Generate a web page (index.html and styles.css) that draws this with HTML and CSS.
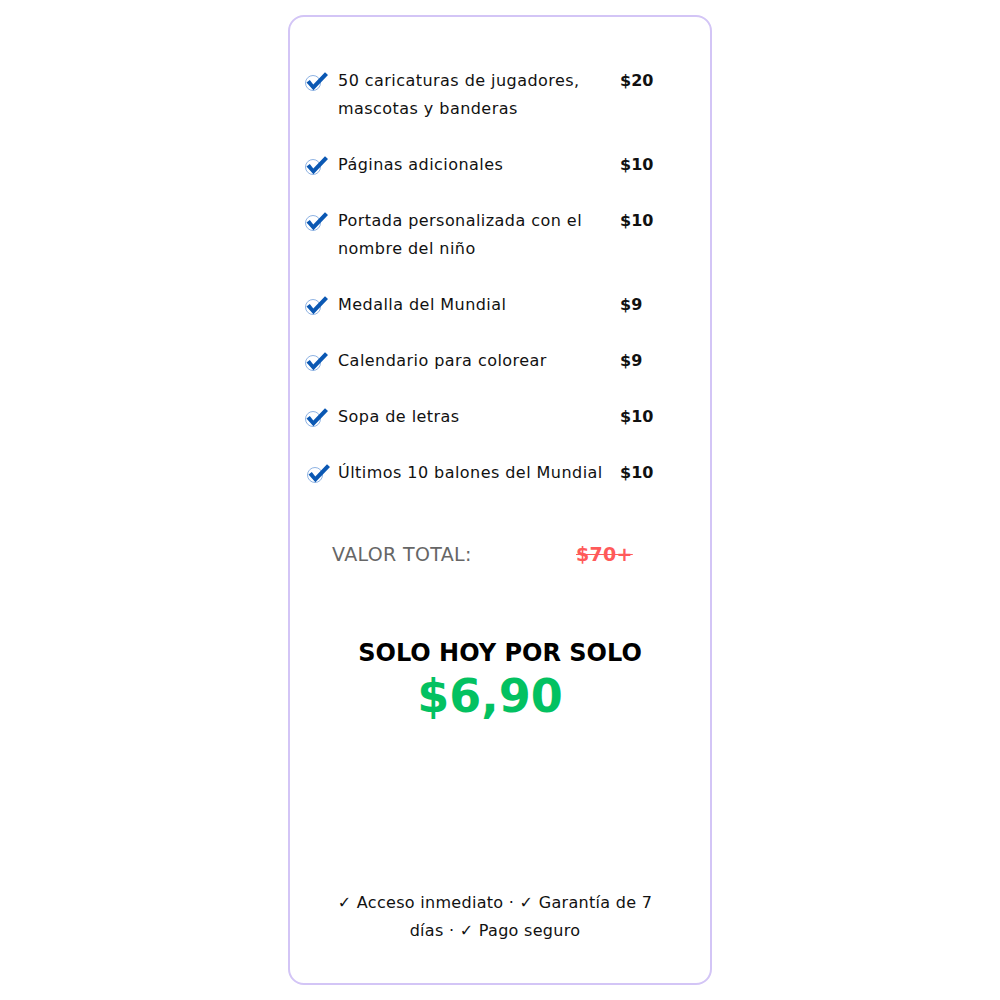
FILE: index.html
```html
<!DOCTYPE html>
<html lang="es">
<head>
<meta charset="utf-8">
<title>Oferta</title>
<link rel="stylesheet" href="styles.css">
</head>
<body>
<div class="card">
  <ul class="items">
    <li class="item">
      <svg class="ic" viewBox="0 0 24 22" width="24" height="22"><circle cx="9" cy="13" r="7.5" fill="none" stroke="#8fb3e3" stroke-width="1"/><path d="M2.5 12.5 L5.8 10 L9.3 14.6 L21 2.3 L24 5 L9.4 20.2 Z" fill="#0b58b3"/></svg>
      <span class="name">50 caricaturas de jugadores, mascotas y banderas</span>
      <span class="price">$20</span>
    </li>
    <li class="item">
      <svg class="ic" viewBox="0 0 24 22" width="24" height="22"><circle cx="9" cy="13" r="7.5" fill="none" stroke="#8fb3e3" stroke-width="1"/><path d="M2.5 12.5 L5.8 10 L9.3 14.6 L21 2.3 L24 5 L9.4 20.2 Z" fill="#0b58b3"/></svg>
      <span class="name">Páginas adicionales</span>
      <span class="price">$10</span>
    </li>
    <li class="item">
      <svg class="ic" viewBox="0 0 24 22" width="24" height="22"><circle cx="9" cy="13" r="7.5" fill="none" stroke="#8fb3e3" stroke-width="1"/><path d="M2.5 12.5 L5.8 10 L9.3 14.6 L21 2.3 L24 5 L9.4 20.2 Z" fill="#0b58b3"/></svg>
      <span class="name">Portada personalizada con el nombre del niño</span>
      <span class="price">$10</span>
    </li>
    <li class="item">
      <svg class="ic" viewBox="0 0 24 22" width="24" height="22"><circle cx="9" cy="13" r="7.5" fill="none" stroke="#8fb3e3" stroke-width="1"/><path d="M2.5 12.5 L5.8 10 L9.3 14.6 L21 2.3 L24 5 L9.4 20.2 Z" fill="#0b58b3"/></svg>
      <span class="name">Medalla del Mundial</span>
      <span class="price">$9</span>
    </li>
    <li class="item">
      <svg class="ic" viewBox="0 0 24 22" width="24" height="22"><circle cx="9" cy="13" r="7.5" fill="none" stroke="#8fb3e3" stroke-width="1"/><path d="M2.5 12.5 L5.8 10 L9.3 14.6 L21 2.3 L24 5 L9.4 20.2 Z" fill="#0b58b3"/></svg>
      <span class="name">Calendario para colorear</span>
      <span class="price">$9</span>
    </li>
    <li class="item">
      <svg class="ic" viewBox="0 0 24 22" width="24" height="22"><circle cx="9" cy="13" r="7.5" fill="none" stroke="#8fb3e3" stroke-width="1"/><path d="M2.5 12.5 L5.8 10 L9.3 14.6 L21 2.3 L24 5 L9.4 20.2 Z" fill="#0b58b3"/></svg>
      <span class="name">Sopa de letras</span>
      <span class="price">$10</span>
    </li>
    <li class="item">
      <svg class="ic ic-last" viewBox="0 0 24 22" width="24" height="22"><circle cx="9" cy="13" r="7.5" fill="none" stroke="#8fb3e3" stroke-width="1"/><path d="M2.5 12.5 L5.8 10 L9.3 14.6 L21 2.3 L24 5 L9.4 20.2 Z" fill="#0b58b3"/></svg>
      <span class="name">Últimos 10 balones del Mundial</span>
      <span class="price">$10</span>
    </li>
  </ul>

  <div class="total">
    <span class="total-label">VALOR TOTAL:</span>
    <span class="total-old">$70+</span>
  </div>

  <div class="offer">
    <div class="offer-title">SOLO HOY POR SOLO</div>
    <div class="offer-price">$6,90</div>
  </div>

  <p class="footer">✓ Acceso inmediato · ✓ Garantía de 7 días · ✓ Pago seguro</p>
</div>
</body>
</html>
```

FILE: styles.css
```css
html, body {
  margin: 0;
  padding: 0;
  background: #ffffff;
}

body {
  font-family: "DejaVu Sans", "Liberation Sans", sans-serif;
  color: #111111;
}

.card {
  box-sizing: border-box;
  width: 424px;
  height: 970px;
  margin: 15px auto 0;
  border: 2px solid #d3c5f6;
  border-radius: 16px;
  padding: 50px 0 38px;
  display: flex;
  flex-direction: column;
}

.items {
  list-style: none;
  margin: 0;
  padding: 0;
  display: flex;
  flex-direction: column;
  gap: 28px;
}

.item {
  display: grid;
  grid-template-columns: 24px 272px 1fr;
  column-gap: 10px;
  padding: 0 14px;
  align-items: start;
}

.ic {
  display: block;
  margin-top: 3px;
}

.ic-last {
  margin-left: 2px;
}

.name {
  font-size: 16px;
  line-height: 28px;
  letter-spacing: 0.45px;
}

.price {
  font-size: 16px;
  line-height: 28px;
  font-weight: 700;
}

.total {
  display: flex;
  margin-top: 53px;
  padding-left: 42px;
  line-height: 28px;
}

.total-label {
  width: 244px;
  font-size: 19px;
  letter-spacing: 0.35px;
  color: #666666;
}

.total-old {
  font-size: 19px;
  font-weight: 700;
  letter-spacing: 0.3px;
  color: #ff5a5a;
  text-decoration: line-through;
}

.offer {
  margin-top: 70px;
  text-align: center;
}

.offer-title {
  font-size: 24px;
  line-height: 30px;
  font-weight: 700;
  color: #000000;
}

.offer-price {
  font-size: 46px;
  line-height: 56px;
  font-weight: 700;
  color: #03c161;
  padding-right: 20px;
}

.footer {
  margin: auto 0 0;
  padding: 0 50px 0 40px;
  text-align: center;
  font-size: 16px;
  line-height: 28px;
  letter-spacing: 0.3px;
  color: #111111;
}
```
